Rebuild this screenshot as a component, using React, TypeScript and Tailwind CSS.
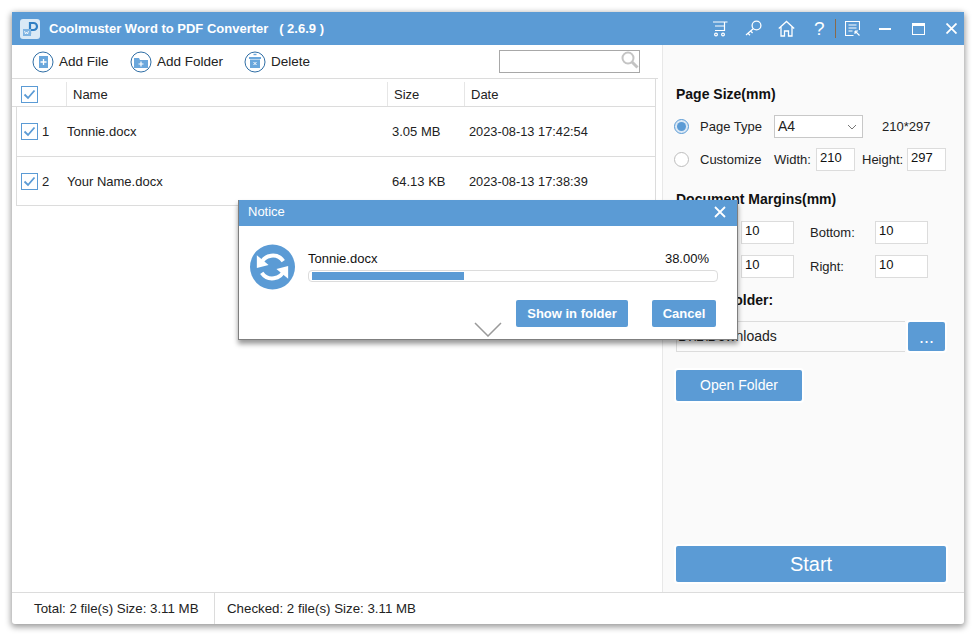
import type { ReactNode } from "react";

const font = { fontFamily: '"Liberation Sans", Arial, sans-serif' };

function Check() {
  return (
    <span className="flex h-[17px] w-[17px] items-center justify-center border border-[#5b9bd5] bg-white">
      <svg width="13" height="11" viewBox="0 0 13 11" fill="none">
        <path d="M1.5 5.5 L5 9 L11.5 1.5" stroke="#5b9bd5" strokeWidth="1.8" />
      </svg>
    </span>
  );
}

function ToolIcon({ children }: { children: ReactNode }) {
  return (
    <svg width="22" height="22" viewBox="0 0 22 22" fill="none">
      <circle cx="11" cy="11" r="10" stroke="#2f6ea5" strokeWidth="1" />
      {children}
    </svg>
  );
}

function Tool({ icon, label, className }: { icon: ReactNode; label: string; className: string }) {
  return (
    <div className={`flex items-center gap-[5px] ${className}`}>
      <ToolIcon>{icon}</ToolIcon>
      <span className="pt-px text-[13.5px] text-[#222]">{label}</span>
    </div>
  );
}

function Field({ value, className }: { value: string; className: string }) {
  return (
    <div className={`h-[23px] border border-[#dcdcdc] bg-white pl-[3px] text-[13px] leading-[17px] text-[#111] ${className}`}>
      {value}
    </div>
  );
}

function Row({ n, name, size, date, className }: { n: string; name: string; size: string; date: string; className: string }) {
  return (
    <div className={`flex items-center text-[13px] text-[#222] ${className}`}>
      <div className="flex w-[50px] items-center gap-[4px] pl-[4px]">
        <Check />
        <span>{n}</span>
      </div>
      <div className="w-[325px]">{name}</div>
      <div className="w-[77px]">{size}</div>
      <div className="text-[12.8px]">{date}</div>
    </div>
  );
}

function BlueButton({ label, className }: { label: string; className: string }) {
  return (
    <div className={`flex items-center justify-center rounded-[2px] bg-[#5b9bd5] text-white ${className}`}>{label}</div>
  );
}

export default function App() {
  return (
    <div className="h-[636px] w-[976px] overflow-hidden bg-white px-3 pt-3" style={font}>
      <div className="relative flex h-[612px] w-[952px] flex-col rounded-[3px] bg-white shadow-[0_2px_6px_1px_rgba(0,0,0,0.4)]">
        <header className="flex h-[33px] shrink-0 items-center bg-[#5b9bd5] text-white">
          <svg className="ml-2" width="20" height="20" viewBox="0 0 20 20" fill="none">
            <rect width="20" height="20" rx="3" fill="#d9e9f6" />
            <path d="M10 15V4h3.5a3.5 3.5 0 0 1 0 7H10" stroke="#2f7fc4" strokeWidth="2.2" />
            <rect x="3" y="10" width="8" height="7" fill="#7fb4e2" />
            <path d="M4.5 12l1 3 1-2 1 2 1-3" stroke="white" strokeWidth="0.8" />
          </svg>
          <div className="ml-[9px] text-[13px] font-bold whitespace-pre">Coolmuster Word to PDF Converter   ( 2.6.9 )</div>
          <div className="ml-auto flex items-center">
            <svg className="mr-[17px]" width="16" height="17" viewBox="0 0 16 17" fill="none" stroke="white" strokeWidth="1.2">
              <path d="M1 2h11.5v8.5H3M3 6h9.5M12.5 2h3" />
              <circle cx="4" cy="14.5" r="1.4" />
              <circle cx="11" cy="14.5" r="1.4" />
            </svg>
            <svg className="mr-[16px]" width="17" height="17" viewBox="0 0 17 17" fill="none" stroke="white" strokeWidth="1.3">
              <circle cx="11.5" cy="5.5" r="4.4" />
              <path d="M8.2 8.8 L1 15 M3 13.2 l2 2 M5.6 11 l2 2" />
            </svg>
            <svg className="mr-[19px]" width="17" height="17" viewBox="0 0 17 17" fill="none" stroke="white" strokeWidth="1.3">
              <path d="M0.8 8.5 L8.5 1.5 L16.2 8.5 M3 7v9h3.5v-5h4v5H14V7" />
            </svg>
            <span className="mr-[11px] w-[10px] text-center text-[19px] leading-none">?</span>
            <div className="mr-[9px] h-[19px] w-px bg-[#8a6a4a]" />
            <svg className="mr-[19px]" width="15" height="15" viewBox="0 0 15 15" fill="none" stroke="white" strokeWidth="1.1">
              <path d="M14.5 9V.5H.5v14h8M3.5 4h8M3.5 7h8M3.5 10h4M10 10l4.5 4.5M10 10h3M10 10v3" />
            </svg>
            <div className="mr-[21px] h-[2px] w-[12px] bg-white" />
            <div className="mr-[21px] h-[12px] w-[13px] border border-t-[3px] border-white" />
            <svg className="mr-[7px]" width="11" height="11" viewBox="0 0 11 11" stroke="white" strokeWidth="1.8">
              <path d="M0.5 0.5 L10.5 10.5 M10.5 0.5 L0.5 10.5" />
            </svg>
          </div>
        </header>

        <div className="flex min-h-0 flex-1">
          <div className="flex w-[650px] shrink-0 flex-col">
            <div className="flex h-[34px] w-[646px] shrink-0 items-center border-b border-[#dcdcdc] pl-[20px]">
              <Tool
                label="Add File"
                className="w-[98px]"
                icon={
                  <>
                    <rect x="7" y="5" width="9" height="12" fill="#6aa7dc" />
                    <path d="M11.5 8v6M8.5 11h6" stroke="white" strokeWidth="1.3" />
                  </>
                }
              />
              <Tool
                label="Add Folder"
                className="w-[114px]"
                icon={
                  <>
                    <path d="M4 7h5l1 2h8v8H4z" fill="#6aa7dc" />
                    <path d="M11 10.5v5M8.5 13h5" stroke="white" strokeWidth="1.2" />
                  </>
                }
              />
              <Tool
                label="Delete"
                className="w-[255px]"
                icon={
                  <>
                    <path d="M5 6h12v2H5zM6 8.5h10V17H6z" fill="#6aa7dc" />
                    <path d="M9.5 3.5h3" stroke="#6aa7dc" strokeWidth="1.4" />
                    <path d="M9.5 11l3 3M12.5 11l-3 3" stroke="white" strokeWidth="1" />
                  </>
                }
              />
              <div className="flex h-[23px] w-[141px] items-start justify-end border border-[#a8a8a8] bg-white">
                <svg width="19" height="19" viewBox="0 0 19 19" fill="none" stroke="#c4c4c4" strokeWidth="2">
                  <circle cx="8" cy="7" r="5.5" />
                  <path d="M12 11 L17.5 16.5" strokeWidth="3" />
                </svg>
              </div>
            </div>
            <div className="flex h-[28px] w-[644px] shrink-0 items-end border-b border-r border-[#dcdcdc] text-[13px] text-[#222]">
              <div className="flex h-[24px] w-[55px] items-center border-r border-[#e6e6e6] pl-[9px]">
                <Check />
              </div>
              <div className="flex h-[24px] w-[321px] items-center border-r border-[#e6e6e6] pl-[6px] pt-px">Name</div>
              <div className="flex h-[24px] w-[77px] items-center border-r border-[#e6e6e6] pl-[6px] pt-px">Size</div>
              <div className="flex h-[24px] items-center pl-[6px] pt-px">Date</div>
            </div>
            <div className="ml-[4px] w-[640px] border-x border-b border-[#dcdcdc]">
              <Row n="1" name="Tonnie.docx" size="3.05 MB" date="2023-08-13 17:42:54" className="h-[50px] border-b border-[#dcdcdc]" />
              <Row n="2" name="Your Name.docx" size="64.13 KB" date="2023-08-13 17:38:39" className="h-[48px] pt-px" />
            </div>
          </div>

          <aside className="flex flex-1 flex-col border-l border-[#e8e8e8] bg-[#fafafa] pl-[13px] pr-[18px] text-[13px] text-[#222]">
            <div className="mt-[39px] text-[14px] font-bold leading-[20px] text-[#111]">Page Size(mm)</div>
            <div className="mt-[11px] flex h-[23px] items-center">
              <span className="-ml-[2px] flex h-[15px] w-[15px] items-center justify-center rounded-full border border-[#5b9bd5] bg-[#dbe9f6]">
                <span className="h-[9px] w-[9px] rounded-full bg-[#5b9bd5]" />
              </span>
              <span className="ml-[11px] w-[74px]">Page Type</span>
              <div className="flex h-[23px] w-[89px] items-center justify-between border border-[#c8c8c8] bg-white pl-[3px] pr-[5px] text-[14px]">
                A4
                <svg width="10" height="6" viewBox="0 0 10 6" fill="none" stroke="#777">
                  <path d="M1 1 L5 5 L9 1" />
                </svg>
              </div>
              <span className="ml-[19px]">210*297</span>
            </div>
            <div className="mt-[10px] flex h-[23px] items-center">
              <span className="-ml-[2px] h-[15px] w-[15px] rounded-full border border-[#bdbdbd] bg-white" />
              <span className="ml-[11px] w-[74px]">Customize</span>
              <span className="w-[42px]">Width:</span>
              <Field value="210" className="w-[39px]" />
              <span className="ml-[7px] w-[45px]">Height:</span>
              <Field value="297" className="w-[39px]" />
            </div>
            <div className="mt-[18px] text-[14px] font-bold leading-[20px] text-[#111]">Document Margins(mm)</div>
            <div className="mt-[12px] flex h-[23px] items-center">
              <span className="w-[65px]">Top:</span>
              <Field value="10" className="w-[53px]" />
              <span className="ml-[16px] w-[65px]">Bottom:</span>
              <Field value="10" className="w-[53px]" />
            </div>
            <div className="mt-[11px] flex h-[23px] items-center">
              <span className="w-[65px]">Left:</span>
              <Field value="10" className="w-[53px]" />
              <span className="ml-[16px] w-[65px]">Right:</span>
              <Field value="10" className="w-[53px]" />
            </div>
            <div className="mt-[12px] text-[14px] font-bold leading-[20px] text-[#111]">Output Folder:</div>
            <div className="mt-[11px] flex items-center">
              <div className="flex h-[31px] w-[229px] items-center border-y border-l border-[#dcdcdc] pl-px text-[14px] text-[#222]">D:\1\Downloads</div>
              <BlueButton label="..." className="ml-[3px] h-[29px] w-[37px] text-[18px] leading-none ring-2 ring-white" />
            </div>
            <BlueButton label="Open Folder" className="mt-[18px] h-[31px] w-[126px] text-[14px] ring-2 ring-white" />
            <BlueButton label="Start" className="mb-[10px] mt-auto h-[36px] w-[270px] text-[20px] ring-2 ring-white" />
          </aside>
        </div>

        <footer className="flex h-[32px] shrink-0 items-center border-t border-[#dcdcdc] text-[13.3px] text-[#222]">
          <div className="flex h-full w-[203px] items-center border-r border-[#dcdcdc] pl-[22px]">Total: 2 file(s) Size: 3.11 MB</div>
          <div className="pl-[12px]">Checked: 2 file(s) Size: 3.11 MB</div>
        </footer>

        {/* Notice dialog over the window */}
        <div className="absolute left-[226px] top-[188px] h-[140px] w-[500px] border-x border-b border-[#7f7f7f] bg-white shadow-[0_4px_5px_rgba(0,0,0,0.4)]">
          <div className="flex h-[26px] items-center justify-between bg-[#5b9bd5] pl-[9px] pr-[11px] pb-[2px] text-[13px] text-white">
            Notice
            <svg width="12" height="12" viewBox="0 0 12 12" stroke="white" strokeWidth="1.8">
              <path d="M1 1 L11 11 M11 1 L1 11" />
            </svg>
          </div>
          <div className="flex pl-[11px] pr-[19px] pt-[18px]">
            <svg width="46" height="46" viewBox="0 0 46 46" fill="none">
              <circle cx="23" cy="23" r="23" fill="#5b9bd5" />
              <path d="M11 20 A13 13 0 0 1 34 17" stroke="white" strokeWidth="4" />
              <path d="M35 26 A13 13 0 0 1 12 29" stroke="white" strokeWidth="4" />
              <path d="M7 11 L19 21 L7 24Z M39 35 L27 25 L39 22Z" fill="white" />
            </svg>
            <div className="ml-[13px] flex-1 pt-[7px]">
              <div className="flex justify-between pr-[9px] text-[13px] leading-[16px] text-[#111]">
                <span>Tonnie.docx</span>
                <span>38.00%</span>
              </div>
              <div className="mt-[3px] h-[12px] w-[410px] rounded-[4px] border border-[#dcdcdc] bg-white pl-[3px] pt-px">
                <div className="h-[8px] w-[152px] bg-[#5b9bd5]" />
              </div>
            </div>
          </div>
          <div className="mt-[10px] flex justify-end gap-[24px] pr-[21px] text-[13px] font-bold">
            <BlueButton label="Show in folder" className="h-[27px] w-[112px] pt-px" />
            <BlueButton label="Cancel" className="h-[27px] w-[64px] pt-px" />
          </div>
          <svg className="absolute left-[235px] top-[122px]" width="28" height="15" viewBox="0 0 28 15" fill="none" stroke="#9a9a9a" strokeWidth="1.5">
            <path d="M1 1 L14 14 L27 1" />
          </svg>
        </div>
      </div>
    </div>
  );
}
